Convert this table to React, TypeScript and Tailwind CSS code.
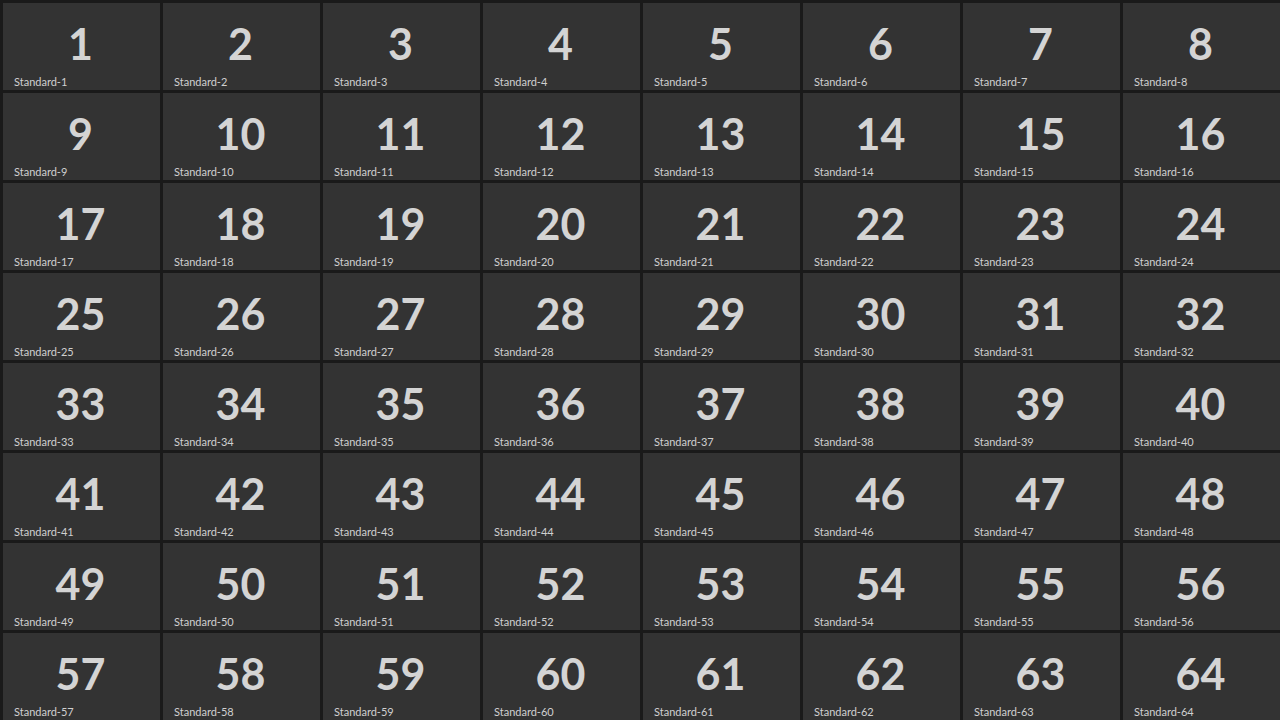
const cells = Array.from({ length: 64 }, (_, i) => i + 1);

export default function App() {
  return (
    <div
      className="w-[1280px] h-[720px] overflow-hidden bg-[#1a1a1a] pl-[3px] pt-[3px]"
      style={{ fontFamily: 'Lato, "Noto Sans", sans-serif' }}
    >
      <div className="grid grid-cols-[repeat(8,157px)] auto-rows-[87px] gap-[3px]">
        {cells.map((n) => (
          <div key={n} className="flex flex-col bg-[#333333]">
            <div className="flex flex-1 items-center justify-center pt-[8px] pr-[2px] text-[43px] font-bold leading-none text-[#d4d4d4]">
              {n}
            </div>
            <div className="px-[11px] pb-[1px] text-[11px] leading-[14px] text-[#d0d0d0]">
              Standard-{n}
            </div>
          </div>
        ))}
      </div>
    </div>
  );
}
